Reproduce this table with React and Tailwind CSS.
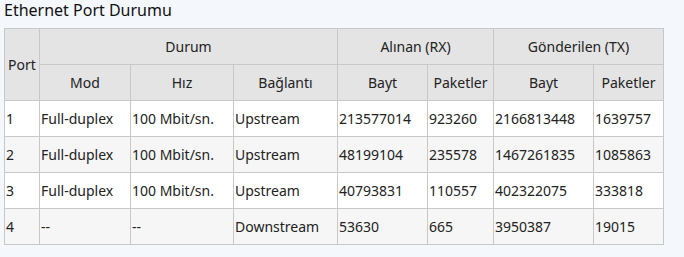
const rows = [
  ["1", "Full-duplex", "100 Mbit/sn.", "Upstream", "213577014", "923260", "2166813448", "1639757"],
  ["2", "Full-duplex", "100 Mbit/sn.", "Upstream", "48199104", "235578", "1467261835", "1085863"],
  ["3", "Full-duplex", "100 Mbit/sn.", "Upstream", "40793831", "110557", "402322075", "333818"],
  ["4", "--", "--", "Downstream", "53630", "665", "3950387", "19015"],
];

const widths = [35, 91, 103, 104, 90, 66, 100, 70];

export default function App() {
  return (
    <div
      className="w-[684px] h-[257px] bg-[#f4f7fc] text-[#222] pl-[4px]"
      style={{ fontFamily: '"Noto Sans", "Open Sans", sans-serif' }}
    >
      <h2 className="text-[16px] leading-[20px] pt-[0px] h-[28px] text-[#111]">Ethernet Port Durumu</h2>
      <table className="table-fixed border-collapse w-[660px] text-[14px] text-[#222]">
        <colgroup>
          {widths.map((w, i) => (
            <col key={i} style={{ width: w }} />
          ))}
        </colgroup>
        <thead className="bg-[#e4e4e4]">
          <tr className="h-[36px]">
            <th rowSpan={2} className="border border-[#c8c8c8] font-normal text-center">Port</th>
            <th colSpan={3} className="border border-[#c8c8c8] font-normal text-center">Durum</th>
            <th colSpan={2} className="border border-[#c8c8c8] font-normal text-center">Alınan (RX)</th>
            <th colSpan={2} className="border border-[#c8c8c8] font-normal text-center">Gönderilen (TX)</th>
          </tr>
          <tr className="h-[36px]">
            {["Mod", "Hız", "Bağlantı", "Bayt", "Paketler", "Bayt", "Paketler"].map((h, i) => (
              <th key={i} className="border border-[#c8c8c8] font-normal text-center">{h}</th>
            ))}
          </tr>
        </thead>
        <tbody>
          {rows.map((r, ri) => (
            <tr key={ri} className={`h-[36px] ${ri % 2 === 1 ? "bg-[#f6f6f6]" : "bg-white"}`}>
              {r.map((c, ci) => (
                <td key={ci} className="border border-[#c8c8c8] pl-[1px] whitespace-nowrap overflow-hidden">{c}</td>
              ))}
            </tr>
          ))}
        </tbody>
      </table>
    </div>
  );
}
